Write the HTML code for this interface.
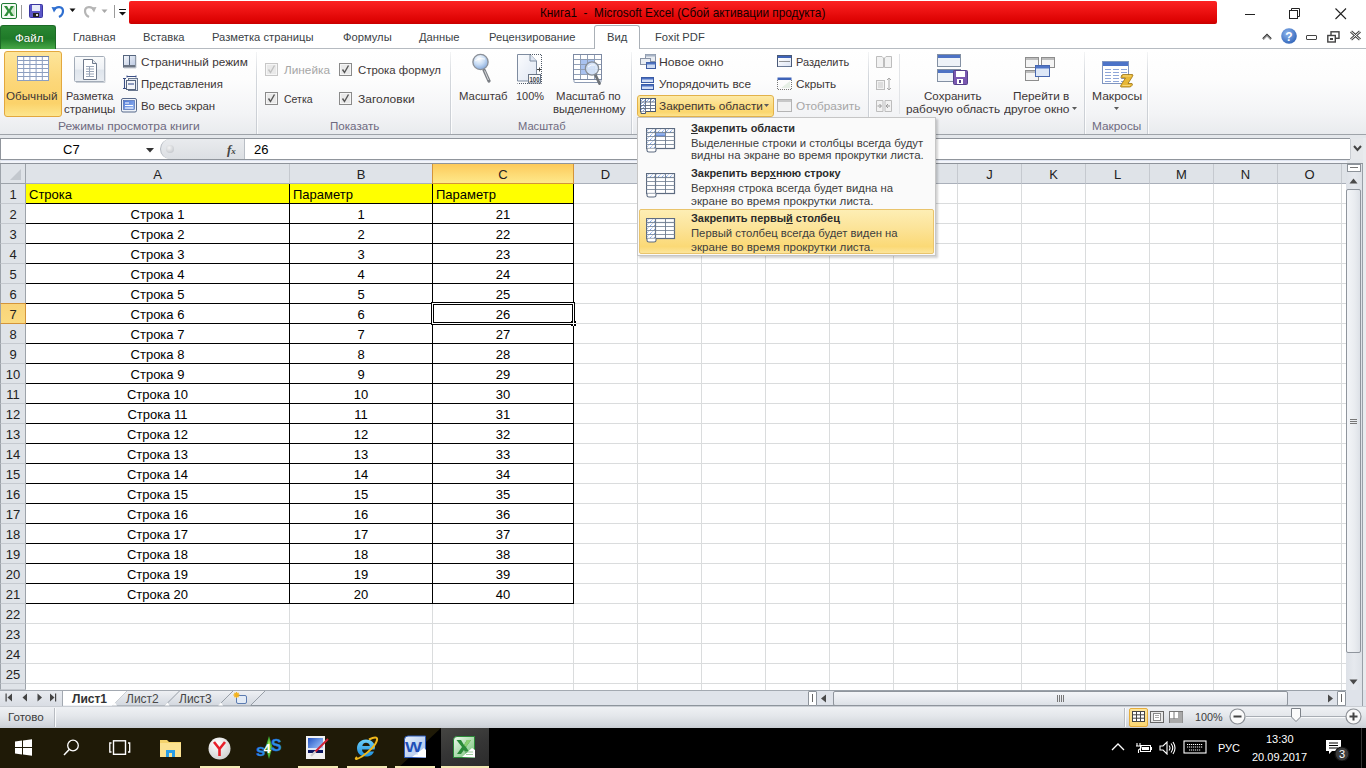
<!DOCTYPE html><html><head><meta charset="utf-8"><style>*{margin:0;padding:0;box-sizing:border-box}
html,body{width:1366px;height:768px;overflow:hidden;background:#fff;font-family:"Liberation Sans",sans-serif;position:relative}
.a{position:absolute}
.t{position:absolute;white-space:nowrap;color:#3b3b3b;font-size:12px;line-height:14px}
.hdrbg{background:#dfe3e8}
.colh{background:#dfe3e8;border-right:1px solid #c5c9cf;border-bottom:1px solid #aab0ba;font-size:13px;line-height:21px;text-align:center;color:#222}
.colh.sel{background:linear-gradient(#fdca5a,#fdd871 45%,#fee98b);border:1px solid #d3943a;border-top:none;color:#222}
.rowh{background:#dfe3e8;border-bottom:1px solid #c5c9cf;border-right:1px solid #9da3aa;border-left:1px solid #9da3aa;font-size:13px;line-height:21px;text-align:center;color:#222}
.rowh.sel{background:linear-gradient(#f9d47a,#fbdb80);border:1px solid #d3943a;border-left:1px solid #9da3aa;line-height:21px}
.gl{background:#dadcdd}
.cell{font-size:13px;line-height:21px;height:19px;color:#000;white-space:nowrap;overflow:hidden}
</style></head><body>
<svg class="a" style="left:1px;top:3px" width="17" height="17" viewBox="0 0 17 17"><rect x="0.5" y="0.5" width="15" height="15" rx="1.5" fill="#f4faf4" stroke="#1e7a34"/>
<rect x="9" y="3" width="5" height="10" fill="#cfe8cf"/>
<path d="M3 3 L6 3 L8 6.5 L10 3 L13 3 L9.6 8 L13 13 L10 13 L8 9.5 L6 13 L3 13 L6.4 8 Z" fill="#2f8f3a"/></svg>
<div class="a" style="left:21px;top:5px;width:1px;height:14px;background:#9a9a9a"></div>
<svg class="a" style="left:29px;top:4px" width="15" height="15" viewBox="0 0 15 15"><rect x="0.5" y="0.5" width="13" height="13" rx="1" fill="#5b57c8" stroke="#3a36a0"/>
<rect x="3" y="1" width="8" height="6" fill="#e8ecf8"/><rect x="4" y="9" width="6" height="4" fill="#222"/><rect x="7" y="10" width="2" height="2" fill="#ddd"/></svg>
<svg class="a" style="left:51px;top:4px" width="15" height="15" viewBox="0 0 15 15"><path d="M3 6 C5 2,12 2,12 7 C12 10,10 12,8 13" fill="none" stroke="#2f6fd0" stroke-width="2.2"/>
<path d="M0.5 3 L6 3.5 L3 8.5 Z" fill="#2f6fd0"/></svg>
<svg class="a" style="left:69px;top:8px" width="8" height="5" viewBox="0 0 8 5"><path d="M0.5 0.5 L6.5 0.5 L3.5 4 Z" fill="#111"/></svg>
<svg class="a" style="left:82px;top:4px" width="15" height="15" viewBox="0 0 15 15"><path d="M12 6 C10 2,3 2,3 7 C3 10,5 12,7 13" fill="none" stroke="#b5b5b5" stroke-width="2.2"/>
<path d="M14.5 3 L9 3.5 L12 8.5 Z" fill="#b5b5b5"/></svg>
<svg class="a" style="left:101px;top:9px" width="8" height="5" viewBox="0 0 8 5"><path d="M0.5 0.5 L6.5 0.5 L3.5 4 Z" fill="#a8a8a8"/></svg>
<div class="a" style="left:114px;top:5px;width:1px;height:13px;background:#9a9a9a"></div>
<div class="a" style="left:119px;top:9px;width:7px;height:1px;background:#111"></div>
<svg class="a" style="left:119px;top:12px" width="8" height="4" viewBox="0 0 8 4"><path d="M0 0 L7 0 L3.5 3.5 Z" fill="#111"/></svg>
<div class="a" style="left:129px;top:1px;width:1088px;height:23px;border-radius:2px;background:linear-gradient(#fc2222,#ee1313 40%,#dd0202 85%,#c80000);"></div>
<div class="t" style="left:540px;top:7px;font-size:12.8px;line-height:12.8px;color:#120000;transform:scaleX(0.92);transform-origin:0 0">Книга1&nbsp; -&nbsp; Microsoft Excel (Сбой активации продукта)</div>
<div class="a" style="left:1245px;top:14px;width:10px;height:1px;background:#222"></div>
<svg class="a" style="left:1289px;top:8px" width="13" height="13" viewBox="0 0 13 13"><rect x="0.5" y="2.5" width="8" height="8" fill="none" stroke="#222"/><path d="M2.5 2.5 V0.5 H10.5 V8.5 H8.5" fill="none" stroke="#222"/></svg>
<svg class="a" style="left:1335px;top:8px" width="13" height="13" viewBox="0 0 13 13"><path d="M0.5 0.5 L11 11 M11 0.5 L0.5 11" stroke="#222" stroke-width="1.1"/></svg>
<div class="a" style="left:0px;top:48px;width:594px;height:1px;background:#b6bbc1"></div>
<div class="a" style="left:640px;top:48px;width:726px;height:1px;background:#b6bbc1"></div>
<div class="a" style="left:0px;top:25px;width:56px;height:24px;border-radius:3px 3px 0 0;background:linear-gradient(#2a8733,#1f7a28 55%,#47a847);border:1px solid #1d6a27;border-bottom:none"></div>
<div class="t" style="left:15px;top:32px;font-size:11.6px;line-height:11.6px;color:#fff;text-shadow:0 0 2px rgba(0,0,0,.35)">Файл</div>
<div class="a" style="left:594px;top:25px;width:46px;height:24px;background:#fff;border:1px solid #aab0b7;border-bottom:none;border-radius:3px 3px 0 0"></div>
<div class="t" style="left:73px;top:32px;font-size:11.2px;line-height:11.2px;color:#3b3f46;">Главная</div>
<div class="t" style="left:143px;top:32px;font-size:11.2px;line-height:11.2px;color:#3b3f46;">Вставка</div>
<div class="t" style="left:212px;top:32px;font-size:11.2px;line-height:11.2px;color:#3b3f46;">Разметка страницы</div>
<div class="t" style="left:343px;top:32px;font-size:11.2px;line-height:11.2px;color:#3b3f46;">Формулы</div>
<div class="t" style="left:419px;top:32px;font-size:11.2px;line-height:11.2px;color:#3b3f46;">Данные</div>
<div class="t" style="left:489px;top:32px;font-size:11.2px;line-height:11.2px;color:#3b3f46;">Рецензирование</div>
<div class="t" style="left:607px;top:32px;font-size:11.2px;line-height:11.2px;color:#3b3f46;">Вид</div>
<div class="t" style="left:655px;top:32px;font-size:11.2px;line-height:11.2px;color:#3b3f46;">Foxit PDF</div>
<svg class="a" style="left:1262px;top:32px" width="11" height="9" viewBox="0 0 11 9"><path d="M1 7 L5 3 L9 7" fill="none" stroke="#333" stroke-width="2.2"/><path d="M1.6 7 L5 3.6 L8.4 7" fill="none" stroke="#fff" stroke-width="0.8"/></svg>
<svg class="a" style="left:1281px;top:28px" width="17" height="17" viewBox="0 0 17 17"><defs><radialGradient id="hg" cx="40%" cy="35%" r="70%"><stop offset="0" stop-color="#8fb6ee"/><stop offset="1" stop-color="#2f63b8"/></radialGradient></defs><circle cx="8" cy="8" r="7.8" fill="url(#hg)"/><text x="8" y="13" font-family="Liberation Sans" font-weight="bold" font-size="12" fill="#fff" text-anchor="middle">?</text></svg>
<div class="a" style="left:1306px;top:35px;width:11px;height:5px;border:1.5px solid #444;border-radius:1px;background:#fff"></div>
<svg class="a" style="left:1327px;top:31px" width="13" height="12" viewBox="0 0 13 12"><rect x="4" y="0.8" width="8" height="6.5" fill="#fff" stroke="#444" stroke-width="1.4"/><rect x="0.8" y="4.5" width="7.5" height="6.5" fill="#fff" stroke="#444" stroke-width="1.4"/><rect x="3" y="7" width="3" height="2" fill="#444"/></svg>
<svg class="a" style="left:1349px;top:30px" width="13" height="11" viewBox="0 0 13 11"><path d="M2 1.5 L11 9.5 M11 1.5 L2 9.5" stroke="#444" stroke-width="3"/><path d="M2 1.5 L11 9.5 M11 1.5 L2 9.5" stroke="#fff" stroke-width="1"/></svg>
<div class="a" style="left:0px;top:49px;width:1366px;height:85px;background:linear-gradient(#fff 0,#fdfdfd 35%,#f3f4f6 75%,#e9ebee 100%)"></div>
<div class="a" style="left:0px;top:134px;width:1366px;height:1px;background:#9ea3a9"></div>
<div class="a" style="left:0px;top:135px;width:1366px;height:3px;background:#e4e7eb"></div>
<div class="a" style="left:256px;top:52px;width:1px;height:82px;background:linear-gradient(rgba(200,204,210,.2),#d3d7dc 30%,#c9cdd3)"></div>
<div class="a" style="left:257px;top:52px;width:1px;height:82px;background:rgba(255,255,255,.8)"></div>
<div class="a" style="left:450px;top:52px;width:1px;height:82px;background:linear-gradient(rgba(200,204,210,.2),#d3d7dc 30%,#c9cdd3)"></div>
<div class="a" style="left:451px;top:52px;width:1px;height:82px;background:rgba(255,255,255,.8)"></div>
<div class="a" style="left:631px;top:52px;width:1px;height:82px;background:linear-gradient(rgba(200,204,210,.2),#d3d7dc 30%,#c9cdd3)"></div>
<div class="a" style="left:632px;top:52px;width:1px;height:82px;background:rgba(255,255,255,.8)"></div>
<div class="a" style="left:868px;top:52px;width:1px;height:82px;background:linear-gradient(rgba(200,204,210,.2),#d3d7dc 30%,#c9cdd3)"></div>
<div class="a" style="left:869px;top:52px;width:1px;height:82px;background:rgba(255,255,255,.8)"></div>
<div class="a" style="left:1084px;top:52px;width:1px;height:82px;background:linear-gradient(rgba(200,204,210,.2),#d3d7dc 30%,#c9cdd3)"></div>
<div class="a" style="left:1085px;top:52px;width:1px;height:82px;background:rgba(255,255,255,.8)"></div>
<div class="a" style="left:1147px;top:52px;width:1px;height:82px;background:linear-gradient(rgba(200,204,210,.2),#d3d7dc 30%,#c9cdd3)"></div>
<div class="a" style="left:1148px;top:52px;width:1px;height:82px;background:rgba(255,255,255,.8)"></div>
<div class="a" style="left:899px;top:54px;width:1px;height:60px;background:#e2e4e7"></div>
<div class="t" style="left:58px;top:120px;font-size:11.6px;line-height:11.6px;color:#6e6a80;transform:scaleX(1.039);transform-origin:0 0;">Режимы просмотра книги</div>
<div class="t" style="left:330px;top:120px;font-size:11.6px;line-height:11.6px;color:#6e6a80;">Показать</div>
<div class="t" style="left:518px;top:120px;font-size:11.6px;line-height:11.6px;color:#6e6a80;transform:scaleX(0.961);transform-origin:0 0;">Масштаб</div>
<div class="t" style="left:1092px;top:120px;font-size:11.6px;line-height:11.6px;color:#6e6a80;transform:scaleX(1.021);transform-origin:0 0;">Макросы</div>
<div class="a" style="left:4px;top:51px;width:58px;height:66px;border:1px solid #e3a83e;border-radius:3px;background:linear-gradient(#fde59a 0,#fcd77a 45%,#fbd26a 80%,#fde68e 100%)"></div>
<svg class="a" style="left:17px;top:56px" width="32" height="26" viewBox="0 0 32 26"><rect x="0" y="0" width="32" height="25" fill="#8d9fc0"/><rect x="1.0" y="1" width="5.2" height="3" fill="#fff"/><rect x="7.2" y="1" width="5.2" height="3" fill="#fff"/><rect x="13.4" y="1" width="5.2" height="3" fill="#fff"/><rect x="19.6" y="1" width="5.2" height="3" fill="#fff"/><rect x="25.8" y="1" width="5.2" height="3" fill="#fff"/><rect x="1.0" y="5" width="5.2" height="3" fill="#fff"/><rect x="7.2" y="5" width="5.2" height="3" fill="#fff"/><rect x="13.4" y="5" width="5.2" height="3" fill="#fff"/><rect x="19.6" y="5" width="5.2" height="3" fill="#fff"/><rect x="25.8" y="5" width="5.2" height="3" fill="#fff"/><rect x="1.0" y="9" width="5.2" height="3" fill="#fff"/><rect x="7.2" y="9" width="5.2" height="3" fill="#fff"/><rect x="13.4" y="9" width="5.2" height="3" fill="#fff"/><rect x="19.6" y="9" width="5.2" height="3" fill="#fff"/><rect x="25.8" y="9" width="5.2" height="3" fill="#fff"/><rect x="1.0" y="13" width="5.2" height="3" fill="#fff"/><rect x="7.2" y="13" width="5.2" height="3" fill="#fff"/><rect x="13.4" y="13" width="5.2" height="3" fill="#fff"/><rect x="19.6" y="13" width="5.2" height="3" fill="#fff"/><rect x="25.8" y="13" width="5.2" height="3" fill="#fff"/><rect x="1.0" y="17" width="5.2" height="3" fill="#fff"/><rect x="7.2" y="17" width="5.2" height="3" fill="#fff"/><rect x="13.4" y="17" width="5.2" height="3" fill="#fff"/><rect x="19.6" y="17" width="5.2" height="3" fill="#fff"/><rect x="25.8" y="17" width="5.2" height="3" fill="#fff"/><rect x="1.0" y="21" width="5.2" height="3" fill="#fff"/><rect x="7.2" y="21" width="5.2" height="3" fill="#fff"/><rect x="13.4" y="21" width="5.2" height="3" fill="#fff"/><rect x="19.6" y="21" width="5.2" height="3" fill="#fff"/><rect x="25.8" y="21" width="5.2" height="3" fill="#fff"/><rect x="0" y="0" width="32" height="1" fill="#6a7fa8"/></svg>
<div class="t" style="left:6px;top:91px;font-size:11.8px;line-height:11.8px;color:#3c3636;transform:scaleX(0.987);transform-origin:0 0;">Обычный</div>
<svg class="a" style="left:74px;top:56px" width="33" height="28" viewBox="0 0 33 28"><defs><linearGradient id="rfr" x1="0" y1="0" x2="0" y2="1"><stop offset="0" stop-color="#fafbfc"/><stop offset="0.5" stop-color="#eef1f5"/><stop offset="0.55" stop-color="#dfe5ec"/><stop offset="1" stop-color="#e9edf2"/></linearGradient></defs><rect x="0.5" y="0.5" width="30" height="25" rx="1" fill="url(#rfr)" stroke="#a3acb8"/><path d="M31 2 V26.5 H2" fill="none" stroke="#c9ced5"/><path d="M9.5 3.5 H18.5 L22.5 7.5 V23.5 H9.5 Z" fill="#fff" stroke="#6f7a8c"/><path d="M18.5 3.5 V7.5 H22.5" fill="#e8ecf2" stroke="#6f7a8c"/><path d="M12 10.5 H20 M12 13 H20 M12 15.5 H20 M12 18 H20 M12 20.5 H20" stroke="#9aa6b8"/><path d="M15.5 10 V21" stroke="#9aa6b8"/></svg>
<div class="t" style="left:66px;top:91px;font-size:11.8px;line-height:11.8px;color:#3c3636;transform:scaleX(0.928);transform-origin:0 0;">Разметка</div>
<div class="t" style="left:64px;top:104px;font-size:11.8px;line-height:11.8px;color:#3c3636;transform:scaleX(0.973);transform-origin:0 0;">страницы</div>
<svg class="a" style="left:122px;top:55px" width="16" height="14" viewBox="0 0 16 14"><defs><linearGradient id="pg1" x1="0" y1="0" x2="1" y2="1"><stop offset="0" stop-color="#f6f8fc"/><stop offset="1" stop-color="#b8c6e0"/></linearGradient></defs><rect x="1.5" y="0.5" width="12" height="11.5" fill="url(#pg1)" stroke="#56667f"/><path d="M7.5 0.5 V10" stroke="#56667f"/><rect x="1.5" y="10" width="12" height="2.5" fill="#6d7684"/><path d="M2 13 H14 V1" fill="none" stroke="#c8ccd2"/></svg>
<div class="t" style="left:141px;top:57px;font-size:11.8px;line-height:11.8px;color:#3c3636;">Страничный режим</div>
<svg class="a" style="left:122px;top:75px" width="17" height="17" viewBox="0 0 17 17"><path d="M1 3.5 H4 M2.5 3.5 V13.5 M1 13.5 H4" fill="none" stroke="#3b4f86" stroke-width="1.1"/><path d="M5 1.5 H14 M5 0.5 V2.5 M14 0.5 V2.5" fill="none" stroke="#3b4f86"/><rect x="6.5" y="3.5" width="9" height="12" fill="#e3e9f2" stroke="#6a7890"/><rect x="4.5" y="5.5" width="9" height="9" fill="#f3f5f9" stroke="#56657e"/><rect x="6" y="8" width="6" height="2" fill="#8e9cc0"/></svg>
<div class="t" style="left:141px;top:79px;font-size:11.8px;line-height:11.8px;color:#3c3636;transform:scaleX(0.964);transform-origin:0 0;">Представления</div>
<svg class="a" style="left:121px;top:98px" width="17" height="16" viewBox="0 0 17 16"><defs><linearGradient id="fs1" x1="0" y1="0" x2="1" y2="1"><stop offset="0" stop-color="#4a74d6"/><stop offset="1" stop-color="#9cbcf4"/></linearGradient></defs><rect x="0.5" y="0.5" width="15" height="13.5" rx="1.5" fill="#eef2f8" stroke="#56688a"/><rect x="2.5" y="2.5" width="11" height="9" fill="url(#fs1)" stroke="#3f5fa8" stroke-width="0.6"/><path d="M4 5 H8 M4 7.5 H12 M4 10 H12" stroke="#fff" stroke-width="1.1"/></svg>
<div class="t" style="left:141px;top:101px;font-size:11.8px;line-height:11.8px;color:#3c3636;transform:scaleX(0.969);transform-origin:0 0;">Во весь экран</div>
<svg class="a" style="left:265px;top:63px" width="14" height="14" viewBox="0 0 14 14"><rect x="0.5" y="0.5" width="12" height="12" fill="#f6f6f6" stroke="#c7c7c7"/><rect x="2" y="2" width="9" height="9" fill="#e9e9e9"/><path d="M3.5 6.5 L5.5 9.5 L9.5 2.5" fill="none" stroke="#c0c0c0" stroke-width="1.4"/></svg>
<div class="t" style="left:284px;top:65px;font-size:11.8px;line-height:11.8px;color:#a6a6a6;">Линейка</div>
<svg class="a" style="left:339px;top:63px" width="14" height="14" viewBox="0 0 14 14"><rect x="0.5" y="0.5" width="12" height="12" fill="#f6f6f6" stroke="#8a8a8a"/><rect x="2" y="2" width="9" height="9" fill="#e9e9e9"/><path d="M3.5 6.5 L5.5 9.5 L9.5 2.5" fill="none" stroke="#555" stroke-width="1.4"/></svg>
<div class="t" style="left:358px;top:65px;font-size:11.8px;line-height:11.8px;color:#3c3636;transform:scaleX(0.966);transform-origin:0 0;">Строка формул</div>
<svg class="a" style="left:265px;top:92px" width="14" height="14" viewBox="0 0 14 14"><rect x="0.5" y="0.5" width="12" height="12" fill="#f6f6f6" stroke="#8a8a8a"/><rect x="2" y="2" width="9" height="9" fill="#e9e9e9"/><path d="M3.5 6.5 L5.5 9.5 L9.5 2.5" fill="none" stroke="#555" stroke-width="1.4"/></svg>
<div class="t" style="left:284px;top:94px;font-size:11.8px;line-height:11.8px;color:#3c3636;transform:scaleX(0.891);transform-origin:0 0;">Сетка</div>
<svg class="a" style="left:339px;top:92px" width="14" height="14" viewBox="0 0 14 14"><rect x="0.5" y="0.5" width="12" height="12" fill="#f6f6f6" stroke="#8a8a8a"/><rect x="2" y="2" width="9" height="9" fill="#e9e9e9"/><path d="M3.5 6.5 L5.5 9.5 L9.5 2.5" fill="none" stroke="#555" stroke-width="1.4"/></svg>
<div class="t" style="left:358px;top:94px;font-size:11.8px;line-height:11.8px;color:#3c3636;transform:scaleX(1.018);transform-origin:0 0;">Заголовки</div>
<svg class="a" style="left:470px;top:52px" width="22" height="33" viewBox="0 0 22 33"><defs><radialGradient id="mg" cx="40%" cy="30%" r="75%"><stop offset="0" stop-color="#ffffff"/><stop offset="0.5" stop-color="#c8dcf4"/><stop offset="1" stop-color="#7fa4d8"/></radialGradient></defs><path d="M14 18 L19 29" stroke="#7a7e84" stroke-width="3.2" stroke-linecap="round"/><path d="M14.5 18.5 L18.5 28" stroke="#d8dadc" stroke-width="1"/><circle cx="10.5" cy="10" r="7.6" fill="url(#mg)" stroke="#8b9098" stroke-width="1.4"/><path d="M5 9 Q9 5 15 7" fill="none" stroke="#fff" stroke-width="1" opacity=".8"/></svg>
<div class="t" style="left:459px;top:91px;font-size:11.8px;line-height:11.8px;color:#3c3636;transform:scaleX(0.961);transform-origin:0 0;">Масштаб</div>
<svg class="a" style="left:516px;top:53px" width="28" height="32" viewBox="0 0 28 32"><defs><linearGradient id="p100" x1="0" y1="0" x2="1" y2="1"><stop offset="0" stop-color="#fbfcfe"/><stop offset="1" stop-color="#dfe6f2"/></linearGradient></defs><path d="M1.5 1.5 H14 L20.5 8 V28 H1.5 Z" fill="url(#p100)" stroke="#7f8ca0"/><path d="M14 1.5 V8 H20.5" fill="#dfe6f2" stroke="#7f8ca0"/><path d="M14 1.5 H25.5 V30.5 H1.5" fill="none" stroke="#505a68" stroke-dasharray="1 1"/><path d="M21 16.5 H25 M23.5 14.5 V18.5" stroke="#444" /><rect x="12.5" y="21.5" width="12" height="8.5" fill="#f8f9fb" stroke="#6a7484"/><text x="18.5" y="28.6" font-family="Liberation Sans" font-weight="bold" font-size="7.5" fill="#3a3f48" text-anchor="middle" textLength="10" lengthAdjust="spacingAndGlyphs">100</text></svg>
<div class="t" style="left:516px;top:91px;font-size:11.8px;line-height:11.8px;color:#3c3636;transform:scaleX(0.931);transform-origin:0 0;">100%</div>
<svg class="a" style="left:573px;top:54px" width="31" height="32" viewBox="0 0 31 32"><rect x="0.5" y="0.5" width="7" height="5" fill="#fff" stroke="#8d9bb3" stroke-width="0.9"/><rect x="7.5" y="0.5" width="7" height="5" fill="#fff" stroke="#8d9bb3" stroke-width="0.9"/><rect x="14.5" y="0.5" width="7" height="5" fill="#fff" stroke="#8d9bb3" stroke-width="0.9"/><rect x="21.5" y="0.5" width="7" height="5" fill="#fff" stroke="#8d9bb3" stroke-width="0.9"/><rect x="0.5" y="5.5" width="7" height="5" fill="#fff" stroke="#8d9bb3" stroke-width="0.9"/><rect x="7.5" y="5.5" width="7" height="5" fill="#a9c2f0" stroke="#8d9bb3" stroke-width="0.9"/><rect x="14.5" y="5.5" width="7" height="5" fill="#a9c2f0" stroke="#8d9bb3" stroke-width="0.9"/><rect x="21.5" y="5.5" width="7" height="5" fill="#fff" stroke="#8d9bb3" stroke-width="0.9"/><rect x="0.5" y="10.5" width="7" height="5" fill="#fff" stroke="#8d9bb3" stroke-width="0.9"/><rect x="7.5" y="10.5" width="7" height="5" fill="#a9c2f0" stroke="#8d9bb3" stroke-width="0.9"/><rect x="14.5" y="10.5" width="7" height="5" fill="#a9c2f0" stroke="#8d9bb3" stroke-width="0.9"/><rect x="21.5" y="10.5" width="7" height="5" fill="#fff" stroke="#8d9bb3" stroke-width="0.9"/><rect x="0.5" y="15.5" width="7" height="5" fill="#fff" stroke="#8d9bb3" stroke-width="0.9"/><rect x="7.5" y="15.5" width="7" height="5" fill="#a9c2f0" stroke="#8d9bb3" stroke-width="0.9"/><rect x="14.5" y="15.5" width="7" height="5" fill="#a9c2f0" stroke="#8d9bb3" stroke-width="0.9"/><rect x="21.5" y="15.5" width="7" height="5" fill="#fff" stroke="#8d9bb3" stroke-width="0.9"/><rect x="0.5" y="20.5" width="7" height="5" fill="#fff" stroke="#8d9bb3" stroke-width="0.9"/><rect x="7.5" y="20.5" width="7" height="5" fill="#fff" stroke="#8d9bb3" stroke-width="0.9"/><rect x="14.5" y="20.5" width="7" height="5" fill="#fff" stroke="#8d9bb3" stroke-width="0.9"/><rect x="21.5" y="20.5" width="7" height="5" fill="#fff" stroke="#8d9bb3" stroke-width="0.9"/><rect x="0.5" y="0.5" width="28" height="25" fill="none" stroke="#7d8aa3"/><path d="M1 26 V27.5 Q1 28.5 2 28.5 H27 Q28 28.5 28 27.5 V26" fill="#fff" stroke="#8d9bb3"/><path d="M22 20 L26.5 29.5" stroke="#6f7378" stroke-width="2.8" stroke-linecap="round"/><circle cx="19" cy="14.5" r="6.6" fill="rgba(214,228,248,.9)" stroke="#868c94" stroke-width="1.3"/><path d="M15 13 Q18 10 22 11" fill="none" stroke="#fff" stroke-width="0.9"/></svg>
<div class="t" style="left:556px;top:91px;font-size:11.8px;line-height:11.8px;color:#3c3636;transform:scaleX(0.97);transform-origin:0 0;">Масштаб по</div>
<div class="t" style="left:553px;top:104px;font-size:11.8px;line-height:11.8px;color:#3c3636;transform:scaleX(0.966);transform-origin:0 0;">выделенному</div>
<svg class="a" style="left:640px;top:54px" width="17" height="16" viewBox="0 0 17 16"><rect x="5.5" y="0.5" width="10" height="7" fill="#e9edf3" stroke="#8994a6"/><rect x="5.5" y="0.5" width="10" height="2" fill="#a8b4c6"/><rect x="0.5" y="4.5" width="10" height="6" fill="#e9edf3" stroke="#8994a6"/><rect x="6.5" y="8.5" width="9" height="6" fill="#cfdcf3" stroke="#3b5aa0"/><rect x="6.5" y="8.5" width="9" height="2" fill="#4f73c0"/></svg>
<div class="t" style="left:659px;top:57px;font-size:11.8px;line-height:11.8px;color:#3c3636;transform:scaleX(1.034);transform-origin:0 0;">Новое окно</div>
<svg class="a" style="left:641px;top:77px" width="14" height="14" viewBox="0 0 14 14"><rect x="0.5" y="0.5" width="12" height="5" fill="#d3def4" stroke="#3a5ba5"/><rect x="1" y="1" width="11" height="1.5" fill="#4a6fc2"/><rect x="0.5" y="7.5" width="12" height="5" fill="#d3def4" stroke="#3a5ba5"/><rect x="1" y="8" width="11" height="1.5" fill="#4a6fc2"/></svg>
<div class="t" style="left:659px;top:79px;font-size:11.8px;line-height:11.8px;color:#3c3636;">Упорядочить все</div>
<div class="a" style="left:637px;top:95px;width:137px;height:22px;border:1px solid #e2b24a;border-radius:3px;background:linear-gradient(#fdeaa6,#fcdc82 50%,#fbd66d 80%,#fde38e)"></div>
<svg class="a" style="left:639px;top:97px" width="18" height="18" viewBox="0 0 18 18"><defs><pattern id="hps" width="3" height="3" patternUnits="userSpaceOnUse"><rect width="3" height="3" fill="#fff"/><path d="M0 3 L3 0" stroke="#7fa2e0" stroke-width="0.9"/></pattern></defs><rect x="1.5" y="1.5" width="15" height="13" fill="#fff"/><rect x="2" y="2" width="4.5" height="12.5" fill="url(#hps)"/><rect x="2" y="2" width="14.5" height="3" fill="url(#hps)"/><rect x="1.5" y="1.5" width="15" height="13" fill="none" stroke="#4a5870"/><path d="M1.5 5 H16.5 M1.5 8.5 H16.5 M1.5 11.5 H16.5 M6.5 1.5 V14.5 M11.5 1.5 V14.5" stroke="#5f6c82" stroke-width="0.9"/><path d="M2 14.5 V16.5 H6.5 V14.5" fill="#fff" stroke="#4a5870"/></svg>
<div class="t" style="left:659px;top:101px;font-size:11.8px;line-height:11.8px;color:#3c3636;">Закрепить области</div>
<svg class="a" style="left:764px;top:104px" width="6" height="4" viewBox="0 0 6 4"><path d="M0 0 H5 L2.5 3 Z" fill="#5a5a5a"/></svg>
<svg class="a" style="left:777px;top:55px" width="16" height="13" viewBox="0 0 16 13"><defs><linearGradient id="spg" x1="0" y1="0" x2="1" y2="1"><stop offset="0" stop-color="#fff"/><stop offset="1" stop-color="#b8c8e8"/></linearGradient></defs><rect x="0.5" y="0.5" width="14" height="11" fill="#fff" stroke="#4a5a78"/><rect x="1" y="1" width="13" height="2" fill="#3f63b8"/><rect x="1" y="3" width="13" height="8.5" fill="url(#spg)" opacity=".5"/><path d="M2.5 6.5 H13" stroke="#333" stroke-dasharray="1 1"/></svg>
<div class="t" style="left:796px;top:57px;font-size:11.8px;line-height:11.8px;color:#3c3636;transform:scaleX(0.932);transform-origin:0 0;">Разделить</div>
<svg class="a" style="left:777px;top:77px" width="16" height="14" viewBox="0 0 16 14"><rect x="0.5" y="0.5" width="14" height="2.5" fill="#3f63b8"/><path d="M0.5 3 V12.5 H14.5 V3" fill="none" stroke="#777" stroke-dasharray="1 1"/><path d="M4 11 L13 4 V11 Z" fill="#e6efe6"/></svg>
<div class="t" style="left:796px;top:79px;font-size:11.8px;line-height:11.8px;color:#3c3636;">Скрыть</div>
<svg class="a" style="left:777px;top:99px" width="16" height="14" viewBox="0 0 16 14"><rect x="0.5" y="0.5" width="14" height="12" fill="#f2f2f2" stroke="#b4b4b4"/><rect x="1" y="1" width="13" height="2" fill="#c8c8c8"/></svg>
<div class="t" style="left:796px;top:101px;font-size:11.8px;line-height:11.8px;color:#a6a6a6;">Отобразить</div>
<svg class="a" style="left:875px;top:55px" width="18" height="14" viewBox="0 0 18 14"><path d="M1.5 1.5 H7 L8.5 3 V12.5 H1.5 Z M9.5 3 L11 1.5 H16.5 V12.5 H9.5 Z" fill="#f2f2f2" stroke="#bdbdbd"/></svg>
<svg class="a" style="left:875px;top:77px" width="18" height="15" viewBox="0 0 18 15"><rect x="1.5" y="3.5" width="8" height="9" fill="#f2f2f2" stroke="#bdbdbd"/><path d="M3 6 H8 M3 8 H8 M3 10 H8" stroke="#c8c8c8"/><path d="M14 1 V13 M12 3 L14 1 L16 3 M12 11 L14 13 L16 11" fill="none" stroke="#aaa"/></svg>
<svg class="a" style="left:875px;top:99px" width="18" height="14" viewBox="0 0 18 14"><path d="M1.5 1.5 H8 V12.5 H1.5 Z M10 1.5 H16.5 V12.5 H10 Z" fill="#f2f2f2" stroke="#bdbdbd"/><path d="M2.5 7 H6 M4.5 5 L6.5 7 L4.5 9 M15 7 H11.5 M13 5 L11 7 L13 9" fill="none" stroke="#999"/></svg>
<svg class="a" style="left:937px;top:54px" width="33" height="32" viewBox="0 0 33 32"><rect x="0.5" y="0.5" width="23" height="12" fill="#eef2f8" stroke="#8390a3"/><rect x="1" y="1" width="22" height="3" fill="#4d72c4"/><rect x="0.5" y="15.5" width="23" height="12" fill="#eef2f8" stroke="#8390a3"/><rect x="1" y="16" width="22" height="3" fill="#4d72c4"/><rect x="16.5" y="16.5" width="14" height="14" rx="1" fill="#7a58b0" stroke="#54408a"/><rect x="19" y="17" width="9" height="6" fill="#fff"/><rect x="20" y="25" width="6" height="5" fill="#fff"/><rect x="22" y="26" width="2" height="3" fill="#54408a"/></svg>
<div class="t" style="left:924px;top:91px;font-size:11.8px;line-height:11.8px;color:#3c3636;transform:scaleX(0.981);transform-origin:0 0;">Сохранить</div>
<div class="t" style="left:906px;top:104px;font-size:11.8px;line-height:11.8px;color:#3c3636;">рабочую область</div>
<svg class="a" style="left:1025px;top:57px" width="31" height="27" viewBox="0 0 31 27"><rect x="0.5" y="0.5" width="13" height="10" fill="#f5f5f5" stroke="#8d8d8d"/><rect x="1" y="1" width="12" height="2" fill="#bdbdbd"/><rect x="16.5" y="0.5" width="13" height="10" fill="#f5f5f5" stroke="#8d8d8d"/><rect x="17" y="1" width="12" height="2" fill="#bdbdbd"/><rect x="0.5" y="13.5" width="13" height="10" fill="#f5f5f5" stroke="#8d8d8d"/><rect x="1" y="14" width="12" height="2" fill="#bdbdbd"/><rect x="10.5" y="8.5" width="14" height="11" fill="#dde7f7" stroke="#4767b0"/><rect x="11" y="9" width="13" height="2.5" fill="#4f74c6"/></svg>
<div class="t" style="left:1013px;top:91px;font-size:11.8px;line-height:11.8px;color:#3c3636;">Перейти в</div>
<div class="t" style="left:1004px;top:104px;font-size:11.8px;line-height:11.8px;color:#3c3636;transform:scaleX(1.016);transform-origin:0 0;">другое окно</div>
<svg class="a" style="left:1072px;top:107px" width="6" height="4" viewBox="0 0 6 4"><path d="M0 0 H5 L2.5 3 Z" fill="#5a5a5a"/></svg>
<svg class="a" style="left:1102px;top:61px" width="33" height="27" viewBox="0 0 33 27"><rect x="0.5" y="0.5" width="26" height="22" fill="#fff" stroke="#7f95c0"/><rect x="1" y="1" width="25" height="4" fill="#4c73c8"/><path d="M3 8.5 H9 M11 8.5 H17 M19 8.5 H25" stroke="#8ea6d8"/><path d="M3 11.5 H9 M11 11.5 H17 M19 11.5 H25" stroke="#8ea6d8"/><path d="M3 14.5 H9 M11 14.5 H17 M19 14.5 H25" stroke="#8ea6d8"/><path d="M3 17.5 H9 M11 17.5 H17 M19 17.5 H25" stroke="#8ea6d8"/><path d="M3 20.5 H9 M11 20.5 H17 M19 20.5 H25" stroke="#8ea6d8"/><path d="M21 13.5 H30.5 Q31.5 13.5 30.5 15.5 L26 22.5 H30 Q31 22.5 30 24.5 Q29 26 27.5 26 H19 Q18 26 19 24 L23.5 17 H19.5 Q18.5 17 19.5 15 Q20 13.5 21 13.5 Z" fill="#e8b838" stroke="#9c7414" stroke-width="0.8"/><path d="M21 15 H29 M20.5 24.5 H28" stroke="#fbe08a" stroke-width="0.8"/></svg>
<div class="t" style="left:1092px;top:91px;font-size:11.8px;line-height:11.8px;color:#3c3636;transform:scaleX(1.021);transform-origin:0 0;">Макросы</div>
<svg class="a" style="left:1114px;top:107px" width="6" height="4" viewBox="0 0 6 4"><path d="M0 0 H5 L2.5 3 Z" fill="#5a5a5a"/></svg>
<div class="a" style="left:0px;top:138px;width:1366px;height:25px;background:#e4e7eb"></div>
<div class="a" style="left:0px;top:138px;width:1350px;height:22px;background:#fff;border-top:1px solid #90959c;border-bottom:1px solid #90959c;border-left:1px solid #90959c"></div>
<div class="a" style="left:1350px;top:139px;width:15px;height:20px;background:#e6e8eb;border-left:1px solid #c9cdd2"></div>
<svg class="a" style="left:1353px;top:145px" width="10" height="7" viewBox="0 0 10 7"><path d="M1 1 L4.5 5 L8 1" fill="none" stroke="#444" stroke-width="2"/></svg>
<div class="a" style="left:1px;top:160px;width:1346px;height:3px;background:#f3f5fa;border-top:1px solid #dfe4f0"></div>
<div class="a" style="left:0px;top:163px;width:1366px;height:1px;background:#8f949b"></div>
<div class="t" style="left:63px;top:143px;font-size:13px;line-height:13px;color:#000;">C7</div>
<svg class="a" style="left:146px;top:148px" width="9" height="5" viewBox="0 0 9 5"><path d="M0 0 H8 L4 4.5 Z" fill="#333"/></svg>
<div class="a" style="left:160px;top:139px;width:85px;height:20px;background:linear-gradient(#e9ebee,#dcdfe3);border-radius:10px 0 0 10px;border-left:1px solid #b3b8bf"></div>
<div class="a" style="left:166px;top:145px;width:8px;height:8px;border-radius:50%;background:radial-gradient(circle at 40% 35%,#f4f4f4,#b9bdc3)"></div>
<div class="a" style="left:244px;top:139px;width:1px;height:20px;background:#b9bec5"></div>
<div class="t" style="left:227px;top:143px;font-size:13px;line-height:13px;color:#444;font-family:'Liberation Serif';font-weight:bold"><i>f<span style="font-size:9px">x</span></i></div>
<div class="t" style="left:254px;top:143px;font-size:13px;line-height:13px;color:#000;">26</div>
<div id="grid">
<div class="a hdrbg" style="left:0;top:164px;width:1346px;height:20px;border-bottom:1px solid #aab0ba"></div>
<div class="a" style="left:0;top:164px;width:26px;height:20px;background:#dfe3e8;border-left:1px solid #9da3aa;border-right:1px solid #9da3aa;border-bottom:1px solid #9da3aa"></div>
<svg class="a" style="left:9px;top:168px" width="14" height="13"><path d="M12 1 L12 12 L1 12 Z" fill="#c3c8ce"/></svg>
<div class="a colh" style="left:26px;top:164px;width:264px;height:20px">A</div>
<div class="a colh" style="left:290px;top:164px;width:143px;height:20px">B</div>
<div class="a colh sel" style="left:432px;top:164px;width:142px;height:20px">C</div>
<div class="a colh" style="left:574px;top:164px;width:64px;height:20px">D</div>
<div class="a colh" style="left:638px;top:164px;width:64px;height:20px">E</div>
<div class="a colh" style="left:702px;top:164px;width:64px;height:20px">F</div>
<div class="a colh" style="left:766px;top:164px;width:64px;height:20px">G</div>
<div class="a colh" style="left:830px;top:164px;width:64px;height:20px">H</div>
<div class="a colh" style="left:894px;top:164px;width:64px;height:20px">I</div>
<div class="a colh" style="left:958px;top:164px;width:64px;height:20px">J</div>
<div class="a colh" style="left:1022px;top:164px;width:64px;height:20px">K</div>
<div class="a colh" style="left:1086px;top:164px;width:64px;height:20px">L</div>
<div class="a colh" style="left:1150px;top:164px;width:64px;height:20px">M</div>
<div class="a colh" style="left:1214px;top:164px;width:64px;height:20px">N</div>
<div class="a colh" style="left:1278px;top:164px;width:64px;height:20px">O</div>
<div class="a colh" style="left:1342px;top:164px;width:64px;height:20px">P</div>
<div class="a rowh" style="left:0;top:184px;width:26px;height:20px">1</div>
<div class="a rowh" style="left:0;top:204px;width:26px;height:20px">2</div>
<div class="a rowh" style="left:0;top:224px;width:26px;height:20px">3</div>
<div class="a rowh" style="left:0;top:244px;width:26px;height:20px">4</div>
<div class="a rowh" style="left:0;top:264px;width:26px;height:20px">5</div>
<div class="a rowh" style="left:0;top:284px;width:26px;height:20px">6</div>
<div class="a rowh sel" style="left:0;top:303px;width:26px;height:21px">7</div>
<div class="a rowh" style="left:0;top:324px;width:26px;height:20px">8</div>
<div class="a rowh" style="left:0;top:344px;width:26px;height:20px">9</div>
<div class="a rowh" style="left:0;top:364px;width:26px;height:20px">10</div>
<div class="a rowh" style="left:0;top:384px;width:26px;height:20px">11</div>
<div class="a rowh" style="left:0;top:404px;width:26px;height:20px">12</div>
<div class="a rowh" style="left:0;top:424px;width:26px;height:20px">13</div>
<div class="a rowh" style="left:0;top:444px;width:26px;height:20px">14</div>
<div class="a rowh" style="left:0;top:464px;width:26px;height:20px">15</div>
<div class="a rowh" style="left:0;top:484px;width:26px;height:20px">16</div>
<div class="a rowh" style="left:0;top:504px;width:26px;height:20px">17</div>
<div class="a rowh" style="left:0;top:524px;width:26px;height:20px">18</div>
<div class="a rowh" style="left:0;top:544px;width:26px;height:20px">19</div>
<div class="a rowh" style="left:0;top:564px;width:26px;height:20px">20</div>
<div class="a rowh" style="left:0;top:584px;width:26px;height:20px">21</div>
<div class="a rowh" style="left:0;top:604px;width:26px;height:20px">22</div>
<div class="a rowh" style="left:0;top:624px;width:26px;height:20px">23</div>
<div class="a rowh" style="left:0;top:644px;width:26px;height:20px">24</div>
<div class="a rowh" style="left:0;top:664px;width:26px;height:20px">25</div>
<div class="a rowh" style="left:0;top:684px;width:26px;height:6px"></div>
<div class="a gl" style="left:289px;top:184px;width:1px;height:506px"></div>
<div class="a gl" style="left:432px;top:184px;width:1px;height:506px"></div>
<div class="a gl" style="left:573px;top:184px;width:1px;height:506px"></div>
<div class="a gl" style="left:637px;top:184px;width:1px;height:506px"></div>
<div class="a gl" style="left:701px;top:184px;width:1px;height:506px"></div>
<div class="a gl" style="left:765px;top:184px;width:1px;height:506px"></div>
<div class="a gl" style="left:829px;top:184px;width:1px;height:506px"></div>
<div class="a gl" style="left:893px;top:184px;width:1px;height:506px"></div>
<div class="a gl" style="left:957px;top:184px;width:1px;height:506px"></div>
<div class="a gl" style="left:1021px;top:184px;width:1px;height:506px"></div>
<div class="a gl" style="left:1085px;top:184px;width:1px;height:506px"></div>
<div class="a gl" style="left:1149px;top:184px;width:1px;height:506px"></div>
<div class="a gl" style="left:1213px;top:184px;width:1px;height:506px"></div>
<div class="a gl" style="left:1277px;top:184px;width:1px;height:506px"></div>
<div class="a gl" style="left:1341px;top:184px;width:1px;height:506px"></div>
<div class="a gl" style="left:1405px;top:184px;width:1px;height:506px"></div>
<div class="a gl" style="left:26px;top:203px;width:1320px;height:1px"></div>
<div class="a gl" style="left:26px;top:223px;width:1320px;height:1px"></div>
<div class="a gl" style="left:26px;top:243px;width:1320px;height:1px"></div>
<div class="a gl" style="left:26px;top:263px;width:1320px;height:1px"></div>
<div class="a gl" style="left:26px;top:283px;width:1320px;height:1px"></div>
<div class="a gl" style="left:26px;top:303px;width:1320px;height:1px"></div>
<div class="a gl" style="left:26px;top:323px;width:1320px;height:1px"></div>
<div class="a gl" style="left:26px;top:343px;width:1320px;height:1px"></div>
<div class="a gl" style="left:26px;top:363px;width:1320px;height:1px"></div>
<div class="a gl" style="left:26px;top:383px;width:1320px;height:1px"></div>
<div class="a gl" style="left:26px;top:403px;width:1320px;height:1px"></div>
<div class="a gl" style="left:26px;top:423px;width:1320px;height:1px"></div>
<div class="a gl" style="left:26px;top:443px;width:1320px;height:1px"></div>
<div class="a gl" style="left:26px;top:463px;width:1320px;height:1px"></div>
<div class="a gl" style="left:26px;top:483px;width:1320px;height:1px"></div>
<div class="a gl" style="left:26px;top:503px;width:1320px;height:1px"></div>
<div class="a gl" style="left:26px;top:523px;width:1320px;height:1px"></div>
<div class="a gl" style="left:26px;top:543px;width:1320px;height:1px"></div>
<div class="a gl" style="left:26px;top:563px;width:1320px;height:1px"></div>
<div class="a gl" style="left:26px;top:583px;width:1320px;height:1px"></div>
<div class="a gl" style="left:26px;top:603px;width:1320px;height:1px"></div>
<div class="a gl" style="left:26px;top:623px;width:1320px;height:1px"></div>
<div class="a gl" style="left:26px;top:643px;width:1320px;height:1px"></div>
<div class="a gl" style="left:26px;top:663px;width:1320px;height:1px"></div>
<div class="a gl" style="left:26px;top:683px;width:1320px;height:1px"></div>
<div class="a" style="left:26px;top:184px;width:547px;height:19px;background:#ffff00"></div>
<div class="a" style="left:26px;top:203px;width:548px;height:1px;background:#000"></div>
<div class="a" style="left:26px;top:223px;width:548px;height:1px;background:#000"></div>
<div class="a" style="left:26px;top:243px;width:548px;height:1px;background:#000"></div>
<div class="a" style="left:26px;top:263px;width:548px;height:1px;background:#000"></div>
<div class="a" style="left:26px;top:283px;width:548px;height:1px;background:#000"></div>
<div class="a" style="left:26px;top:303px;width:548px;height:1px;background:#000"></div>
<div class="a" style="left:26px;top:323px;width:548px;height:1px;background:#000"></div>
<div class="a" style="left:26px;top:343px;width:548px;height:1px;background:#000"></div>
<div class="a" style="left:26px;top:363px;width:548px;height:1px;background:#000"></div>
<div class="a" style="left:26px;top:383px;width:548px;height:1px;background:#000"></div>
<div class="a" style="left:26px;top:403px;width:548px;height:1px;background:#000"></div>
<div class="a" style="left:26px;top:423px;width:548px;height:1px;background:#000"></div>
<div class="a" style="left:26px;top:443px;width:548px;height:1px;background:#000"></div>
<div class="a" style="left:26px;top:463px;width:548px;height:1px;background:#000"></div>
<div class="a" style="left:26px;top:483px;width:548px;height:1px;background:#000"></div>
<div class="a" style="left:26px;top:503px;width:548px;height:1px;background:#000"></div>
<div class="a" style="left:26px;top:523px;width:548px;height:1px;background:#000"></div>
<div class="a" style="left:26px;top:543px;width:548px;height:1px;background:#000"></div>
<div class="a" style="left:26px;top:563px;width:548px;height:1px;background:#000"></div>
<div class="a" style="left:26px;top:583px;width:548px;height:1px;background:#000"></div>
<div class="a" style="left:26px;top:603px;width:548px;height:1px;background:#000"></div>
<div class="a" style="left:289px;top:184px;width:1px;height:420px;background:#000"></div>
<div class="a" style="left:432px;top:184px;width:1px;height:420px;background:#000"></div>
<div class="a" style="left:573px;top:184px;width:1px;height:420px;background:#000"></div>
<div class="a cell" style="left:26px;top:184px;width:263px;text-align:left;padding-left:3px;">Строка</div>
<div class="a cell" style="left:290px;top:184px;width:142px;text-align:left;padding-left:3px;">Параметр</div>
<div class="a cell" style="left:433px;top:184px;width:140px;text-align:left;padding-left:3px;">Параметр</div>
<div class="a cell" style="left:26px;top:204px;width:263px;text-align:center;">Строка 1</div>
<div class="a cell" style="left:290px;top:204px;width:142px;text-align:center;">1</div>
<div class="a cell" style="left:433px;top:204px;width:140px;text-align:center;">21</div>
<div class="a cell" style="left:26px;top:224px;width:263px;text-align:center;">Строка 2</div>
<div class="a cell" style="left:290px;top:224px;width:142px;text-align:center;">2</div>
<div class="a cell" style="left:433px;top:224px;width:140px;text-align:center;">22</div>
<div class="a cell" style="left:26px;top:244px;width:263px;text-align:center;">Строка 3</div>
<div class="a cell" style="left:290px;top:244px;width:142px;text-align:center;">3</div>
<div class="a cell" style="left:433px;top:244px;width:140px;text-align:center;">23</div>
<div class="a cell" style="left:26px;top:264px;width:263px;text-align:center;">Строка 4</div>
<div class="a cell" style="left:290px;top:264px;width:142px;text-align:center;">4</div>
<div class="a cell" style="left:433px;top:264px;width:140px;text-align:center;">24</div>
<div class="a cell" style="left:26px;top:284px;width:263px;text-align:center;">Строка 5</div>
<div class="a cell" style="left:290px;top:284px;width:142px;text-align:center;">5</div>
<div class="a cell" style="left:433px;top:284px;width:140px;text-align:center;">25</div>
<div class="a cell" style="left:26px;top:304px;width:263px;text-align:center;">Строка 6</div>
<div class="a cell" style="left:290px;top:304px;width:142px;text-align:center;">6</div>
<div class="a cell" style="left:433px;top:304px;width:140px;text-align:center;">26</div>
<div class="a cell" style="left:26px;top:324px;width:263px;text-align:center;">Строка 7</div>
<div class="a cell" style="left:290px;top:324px;width:142px;text-align:center;">7</div>
<div class="a cell" style="left:433px;top:324px;width:140px;text-align:center;">27</div>
<div class="a cell" style="left:26px;top:344px;width:263px;text-align:center;">Строка 8</div>
<div class="a cell" style="left:290px;top:344px;width:142px;text-align:center;">8</div>
<div class="a cell" style="left:433px;top:344px;width:140px;text-align:center;">28</div>
<div class="a cell" style="left:26px;top:364px;width:263px;text-align:center;">Строка 9</div>
<div class="a cell" style="left:290px;top:364px;width:142px;text-align:center;">9</div>
<div class="a cell" style="left:433px;top:364px;width:140px;text-align:center;">29</div>
<div class="a cell" style="left:26px;top:384px;width:263px;text-align:center;">Строка 10</div>
<div class="a cell" style="left:290px;top:384px;width:142px;text-align:center;">10</div>
<div class="a cell" style="left:433px;top:384px;width:140px;text-align:center;">30</div>
<div class="a cell" style="left:26px;top:404px;width:263px;text-align:center;">Строка 11</div>
<div class="a cell" style="left:290px;top:404px;width:142px;text-align:center;">11</div>
<div class="a cell" style="left:433px;top:404px;width:140px;text-align:center;">31</div>
<div class="a cell" style="left:26px;top:424px;width:263px;text-align:center;">Строка 12</div>
<div class="a cell" style="left:290px;top:424px;width:142px;text-align:center;">12</div>
<div class="a cell" style="left:433px;top:424px;width:140px;text-align:center;">32</div>
<div class="a cell" style="left:26px;top:444px;width:263px;text-align:center;">Строка 13</div>
<div class="a cell" style="left:290px;top:444px;width:142px;text-align:center;">13</div>
<div class="a cell" style="left:433px;top:444px;width:140px;text-align:center;">33</div>
<div class="a cell" style="left:26px;top:464px;width:263px;text-align:center;">Строка 14</div>
<div class="a cell" style="left:290px;top:464px;width:142px;text-align:center;">14</div>
<div class="a cell" style="left:433px;top:464px;width:140px;text-align:center;">34</div>
<div class="a cell" style="left:26px;top:484px;width:263px;text-align:center;">Строка 15</div>
<div class="a cell" style="left:290px;top:484px;width:142px;text-align:center;">15</div>
<div class="a cell" style="left:433px;top:484px;width:140px;text-align:center;">35</div>
<div class="a cell" style="left:26px;top:504px;width:263px;text-align:center;">Строка 16</div>
<div class="a cell" style="left:290px;top:504px;width:142px;text-align:center;">16</div>
<div class="a cell" style="left:433px;top:504px;width:140px;text-align:center;">36</div>
<div class="a cell" style="left:26px;top:524px;width:263px;text-align:center;">Строка 17</div>
<div class="a cell" style="left:290px;top:524px;width:142px;text-align:center;">17</div>
<div class="a cell" style="left:433px;top:524px;width:140px;text-align:center;">37</div>
<div class="a cell" style="left:26px;top:544px;width:263px;text-align:center;">Строка 18</div>
<div class="a cell" style="left:290px;top:544px;width:142px;text-align:center;">18</div>
<div class="a cell" style="left:433px;top:544px;width:140px;text-align:center;">38</div>
<div class="a cell" style="left:26px;top:564px;width:263px;text-align:center;">Строка 19</div>
<div class="a cell" style="left:290px;top:564px;width:142px;text-align:center;">19</div>
<div class="a cell" style="left:433px;top:564px;width:140px;text-align:center;">39</div>
<div class="a cell" style="left:26px;top:584px;width:263px;text-align:center;">Строка 20</div>
<div class="a cell" style="left:290px;top:584px;width:142px;text-align:center;">20</div>
<div class="a cell" style="left:433px;top:584px;width:140px;text-align:center;">40</div>
<div class="a" style="left:431px;top:302px;width:144px;height:23px;border:1px solid #000"></div>
<div class="a" style="left:432px;top:303px;width:142px;height:21px;border:1px solid #fff"></div>
<div class="a" style="left:433px;top:304px;width:140px;height:19px;border:1px solid #000"></div>
<div class="a" style="left:571px;top:321px;width:5px;height:5px;background:#000"></div>
<div class="a" style="left:573px;top:321px;width:1px;height:5px;background:#fff"></div>
<div class="a" style="left:571px;top:323px;width:5px;height:1px;background:#fff"></div>
</div>
<div class="a" style="left:1346px;top:164px;width:20px;height:526px;background:#e4e7ec"></div>
<div class="a" style="left:1346px;top:164px;width:16px;height:526px;background:linear-gradient(90deg,#dde1e7,#e6e9ee 50%,#dde1e7)"></div>
<div class="a" style="left:1362px;top:164px;width:1px;height:526px;background:#9aa0a8"></div>
<div class="a" style="left:1363px;top:138px;width:3px;height:590px;background:#e9ebee"></div>
<div class="a" style="left:1347px;top:164px;width:14px;height:8px;background:#fff;border:1px solid #8c9299"></div>
<div class="a" style="left:1350px;top:167px;width:8px;height:1px;background:#777"></div>
<svg class="a" style="left:1349px;top:178px" width="10" height="6" viewBox="0 0 10 6"><path d="M0.5 5.5 L4.5 0.5 L8.5 5.5 Z" fill="#4a4a4a"/></svg>
<div class="a" style="left:1346px;top:189px;width:15px;height:464px;border:1px solid #8f959d;border-radius:2px;background:linear-gradient(90deg,#f3f5f8,#e9ecf0 60%,#dde1e7)"></div>
<div class="a" style="left:1350px;top:419px;width:7px;height:1px;background:#777"></div>
<div class="a" style="left:1350px;top:421px;width:7px;height:1px;background:#777"></div>
<div class="a" style="left:1350px;top:423px;width:7px;height:1px;background:#777"></div>
<svg class="a" style="left:1349px;top:679px" width="10" height="6" viewBox="0 0 10 6"><path d="M0.5 0.5 L8.5 0.5 L4.5 5.5 Z" fill="#4a4a4a"/></svg>
<div class="a" style="left:0px;top:690px;width:1366px;height:16px;background:#dfe3ea"></div>
<div class="a" style="left:1362px;top:690px;width:1px;height:16px;background:#9aa0a8"></div>
<div class="a" style="left:0px;top:690px;width:808px;height:1px;background:#a3a9b1"></div>
<div class="a" style="left:808px;top:690px;width:538px;height:1px;background:#9aa1a9"></div>
<div class="a" style="left:0px;top:690px;width:63px;height:16px;background:linear-gradient(#e8ebf0,#d9dde4);border:1px solid #a3a9b1;border-left:none;border-bottom:none"></div>
<svg class="a" style="left:5px;top:693px" width="9" height="10" viewBox="0 0 9 10"><rect x="0.5" y="0.5" width="1.2" height="8" fill="#444"/><path d="M7 0.5 L2.5 4.5 L7 8.5 Z" fill="#444"/></svg>
<svg class="a" style="left:21px;top:693px" width="8" height="10" viewBox="0 0 8 10"><path d="M6 0.5 L1.5 4.5 L6 8.5 Z" fill="#444"/></svg>
<svg class="a" style="left:36px;top:693px" width="8" height="10" viewBox="0 0 8 10"><path d="M1.5 0.5 L6 4.5 L1.5 8.5 Z" fill="#444"/></svg>
<svg class="a" style="left:49px;top:693px" width="9" height="10" viewBox="0 0 9 10"><path d="M1 0.5 L5.5 4.5 L1 8.5 Z" fill="#444"/><rect x="6" y="0.5" width="1.2" height="8" fill="#444"/></svg>
<svg class="a" style="left:0px;top:690px" width="1346" height="17" viewBox="0 0 1346 17"><defs><linearGradient id="tg" x1="0" y1="0" x2="0" y2="1"><stop offset="0" stop-color="#eef0f4"/><stop offset="1" stop-color="#d3d8df"/></linearGradient></defs>
<path d="M112 15.5 H1346" stroke="#8e959d"/>
<path d="M218.5 15.5 L233 1 L265 1 L250.5 15.5 Z" fill="url(#tg)"/>
<path d="M165 15.5 L179.5 1 L233 1 L218.5 15.5 Z" fill="url(#tg)"/>
<path d="M112.5 15.5 L127 1 L179.5 1 L165 15.5 Z" fill="url(#tg)"/>
<path d="M112.5 15.5 L127 1 M165 15.5 L179.5 1 M218.5 15.5 L233 1 M250.5 15.5 L265 1" stroke="#979ea7" stroke-width="1"/>
<path d="M112 15.5 l3 -3 l2 3 Z M164.5 15.5 l3 -3 l2 3 Z M218 15.5 l3 -3 l2 3 Z" fill="#fff"/>
<path d="M63 1 H127 L112.5 15.5 H63 Z" fill="#fff"/></svg>
<div class="t" style="left:72px;top:693px;font-size:12px;line-height:12px;color:#333;font-weight:bold">Лист1</div>
<div class="t" style="left:126px;top:693px;font-size:12px;line-height:12px;color:#4a4a4a;">Лист2</div>
<div class="t" style="left:179px;top:693px;font-size:12px;line-height:12px;color:#444;">Лист3</div>
<svg class="a" style="left:232px;top:691px" width="17" height="14" viewBox="0 0 17 14"><rect x="4.5" y="4.5" width="10" height="8" rx="1.5" fill="#e3ebf6" stroke="#5b7bb0"/><path d="M4.5 1 L4.5 7 M1.5 4 L7.5 4 M2.4 1.9 L6.6 6.1 M6.6 1.9 L2.4 6.1" stroke="#f3b21c" stroke-width="1.3"/></svg>
<div class="a" style="left:808px;top:691px;width:9px;height:15px;background:#fff;border:1px solid #8d939b;border-radius:1px"></div>
<div class="a" style="left:812px;top:694px;width:1px;height:8px;background:#666"></div>
<svg class="a" style="left:820px;top:694px" width="7" height="9" viewBox="0 0 7 9"><path d="M6 0.5 L1 4.5 L6 8.5 Z" fill="#4a4a4a"/></svg>
<div class="a" style="left:833px;top:691px;width:455px;height:15px;border:1px solid #8f959d;border-radius:2px;background:linear-gradient(#f3f5f8,#e8ebf0 55%,#dde1e7)"></div>
<div class="a" style="left:1057px;top:695px;width:1px;height:7px;background:#777"></div>
<div class="a" style="left:1059px;top:695px;width:1px;height:7px;background:#777"></div>
<div class="a" style="left:1061px;top:695px;width:1px;height:7px;background:#777"></div>
<div class="a" style="left:1063px;top:695px;width:1px;height:7px;background:#777"></div>
<svg class="a" style="left:1327px;top:694px" width="7" height="9" viewBox="0 0 7 9"><path d="M1 0.5 L6 4.5 L1 8.5 Z" fill="#4a4a4a"/></svg>
<div class="a" style="left:1337px;top:691px;width:9px;height:15px;background:#fff;border:1px solid #8d939b;border-radius:1px"></div>
<div class="a" style="left:1341px;top:694px;width:1px;height:8px;background:#666"></div>
<div class="a" style="left:0px;top:706px;width:1366px;height:22px;background:linear-gradient(#f0f2f5,#e4e7eb 45%,#d3d7dd 85%,#c9cdd3)"></div>
<div class="a" style="left:0px;top:706px;width:1366px;height:1px;background:#c9cdd3"></div>
<div class="t" style="left:8px;top:711px;font-size:11.6px;line-height:11.6px;color:#3b3b3b;">Готово</div>
<div class="a" style="left:54px;top:708px;width:1px;height:19px;background:#b8bcc2"></div>
<div class="a" style="left:55px;top:708px;width:1px;height:19px;background:#fafbfc"></div>
<div class="a" style="left:1124px;top:708px;width:1px;height:19px;background:#b8bcc2"></div>
<div class="a" style="left:1125px;top:708px;width:1px;height:19px;background:#fafbfc"></div>
<div class="a" style="left:1129px;top:708px;width:19px;height:19px;border:1px solid #e6ad3c;border-radius:2px;background:linear-gradient(#fde69c,#fcd773)"></div>
<svg class="a" style="left:1132px;top:711px" width="14" height="12" viewBox="0 0 14 12"><rect x="0.5" y="0.5" width="12" height="10" fill="#fff" stroke="#444"/><path d="M0.5 3.8 H12.5 M0.5 7.2 H12.5 M4.5 0.5 V10.5 M8.5 0.5 V10.5" stroke="#444"/></svg>
<svg class="a" style="left:1150px;top:711px" width="15" height="13" viewBox="0 0 15 13"><rect x="0.5" y="0.5" width="13" height="11" fill="#e8e8e8" stroke="#666"/><rect x="3.5" y="2.5" width="7" height="7" fill="#fff" stroke="#888"/><path d="M5 4.5 H9 M5 6.5 H9" stroke="#aaa"/></svg>
<svg class="a" style="left:1169px;top:711px" width="15" height="13" viewBox="0 0 15 13"><rect x="0.5" y="0.5" width="13" height="11" fill="#fff" stroke="#777"/><rect x="1" y="7" width="12.5" height="5" fill="#a9a9a9"/><rect x="9" y="1" width="4.5" height="6" fill="#a9a9a9"/><path d="M5 0.5 V8" stroke="#777"/></svg>
<div class="t" style="left:1195px;top:712px;font-size:10.8px;line-height:10.8px;color:#3b3b3b;transform:scaleX(1)">100%</div>
<div class="a" style="left:1246px;top:716px;width:100px;height:1px;background:#a8adb4"></div>
<div class="a" style="left:1246px;top:717px;width:100px;height:1px;background:#f8f9fa"></div>
<svg class="a" style="left:1229px;top:708px" width="18" height="18" viewBox="0 0 18 18"><circle cx="8.5" cy="8.5" r="7.5" fill="#fafafa" stroke="#8b8f95" stroke-width="1.2"/><rect x="4.5" y="7.5" width="8" height="2" fill="#444"/></svg>
<svg class="a" style="left:1345px;top:708px" width="18" height="18" viewBox="0 0 18 18"><circle cx="8.5" cy="8.5" r="7.5" fill="#fafafa" stroke="#8b8f95" stroke-width="1.2"/><rect x="4.5" y="7.5" width="8" height="2" fill="#444"/><rect x="7.5" y="4.5" width="2" height="8" fill="#444"/></svg>
<svg class="a" style="left:1291px;top:708px" width="11" height="15" viewBox="0 0 11 15"><path d="M0.5 0.5 H9.5 V9 L5 13.5 L0.5 9 Z" fill="#fbfbfb" stroke="#7d8289"/></svg>
<div class="a" style="left:0px;top:728px;width:1366px;height:40px;background:#000"></div>
<svg class="a" style="left:0px;top:728px" width="520" height="40" viewBox="0 0 520 40"><path d="M0 0 H441 L398 40 H0 Z" fill="#1f1a07"/><path d="M441 0 H489 V40 H441 Z" fill="#2f2f2f"/></svg>
<div class="a" style="left:441px;top:728px;width:48px;height:40px;background:linear-gradient(160deg,#454542,#353535 50%,#2b2b2b)"></div>
<svg class="a" style="left:15px;top:739px" width="18" height="18" viewBox="0 0 18 18"><path d="M0 2.6 L7 1.6 V8 H0 Z M8 1.5 L17 0.2 V8 H8 Z M0 9 H7 V15.4 L0 14.4 Z M8 9 H17 V16.8 L8 15.5 Z" fill="#fff"/></svg>
<svg class="a" style="left:63px;top:739px" width="17" height="18" viewBox="0 0 17 18"><circle cx="10" cy="6.5" r="5.3" fill="none" stroke="#fff" stroke-width="1.3"/><path d="M6.2 10.5 L1 16" stroke="#fff" stroke-width="1.5"/></svg>
<svg class="a" style="left:109px;top:740px" width="22" height="16" viewBox="0 0 22 16"><rect x="4.5" y="0.8" width="12" height="13.5" fill="none" stroke="#fff" stroke-width="1.4"/><path d="M2.5 3 H0.8 V12 H2.5 M19 3 H20.7 V12 H19" fill="none" stroke="#fff" stroke-width="1.3"/></svg>
<svg class="a" style="left:159px;top:738px" width="24" height="21" viewBox="0 0 24 21"><path d="M1 2 H8 L10 4 H22 V19 H1 Z" fill="#f4d36c"/><rect x="1" y="5" width="21" height="14" fill="#fbe291"/><path d="M7 19 V12 H16 V19 H13 V15 H10 V19 Z" fill="#2a9ee6"/></svg>
<svg class="a" style="left:208px;top:737px" width="24" height="24" viewBox="0 0 24 24"><defs><radialGradient id="yg" cx="40%" cy="30%" r="75%"><stop offset="0" stop-color="#fff"/><stop offset="1" stop-color="#cfcfcf"/></radialGradient></defs><circle cx="11.5" cy="11.5" r="11" fill="url(#yg)"/><path d="M6 5 L11.5 12 L17 5 M11.5 12 V19" fill="none" stroke="#e8202a" stroke-width="2.6"/></svg>
<svg class="a" style="left:256px;top:736px" width="26" height="24" viewBox="0 0 26 24"><path d="M13 0 L16.5 11 L13 23 L9.5 11 Z" fill="#3fae32"/><path d="M13 3 L14.5 11 L13 19 L11.5 11 Z" fill="#b8e860"/><text x="0" y="20" font-family="Liberation Sans" font-weight="bold" font-size="17" fill="#2f8fe8" stroke="#1d6fd0" stroke-width="0.4">s</text><text x="7.5" y="17" font-family="Liberation Sans" font-weight="bold" font-size="13" fill="#fff">4</text><text x="15" y="15" font-family="Liberation Sans" font-weight="bold" font-size="16" fill="#2f8fe8" stroke="#1d6fd0" stroke-width="0.4">S</text></svg>
<svg class="a" style="left:306px;top:736px" width="24" height="24" viewBox="0 0 24 24"><defs><linearGradient id="sk" x1="0" y1="0" x2="1" y2="1"><stop offset="0" stop-color="#2452c0"/><stop offset="0.5" stop-color="#6f9ae8"/><stop offset="1" stop-color="#c8dcf8"/></linearGradient></defs><rect x="0" y="0" width="19" height="23" fill="#f2f2f2"/><rect x="2" y="2" width="15" height="14" fill="url(#sk)"/><rect x="2" y="14" width="15" height="3" fill="#0b1660"/><rect x="2" y="12" width="15" height="2" fill="#dfe8f8"/><path d="M22 3 L9 16" stroke="#d22234" stroke-width="2"/><path d="M9.5 15.5 L5 20" stroke="#cfcfcf" stroke-width="2.2"/></svg>
<svg class="a" style="left:354px;top:736px" width="26" height="24" viewBox="0 0 26 24"><defs><linearGradient id="ie" x1="0" y1="0" x2="0" y2="1"><stop offset="0" stop-color="#6fd0f8"/><stop offset="1" stop-color="#1d8fe0"/></linearGradient></defs><path d="M12 3.5 C6 3.5 3 8 3 12 C3 17 6.5 20.5 12 20.5 C16 20.5 19 18.5 20 15.5 H15 C14 17 13 17.5 12 17.5 C9.5 17.5 8 15.5 8 13.5 H20.5 C20.8 12.8 21 12 21 11.5 C21 7 17 3.5 12 3.5 Z M8.3 10 C8.8 8 10 6.8 12 6.8 C14 6.8 15.5 8 15.8 10 Z" fill="url(#ie)" fill-rule="evenodd"/><path d="M3 21 C0 24 3 23.5 8 20.5 C15 16 22 9 23 4 C23.8 0.5 20 1 15 3.5" fill="none" stroke="#f0b81c" stroke-width="2"/></svg>
<svg class="a" style="left:404px;top:735px" width="23" height="24" viewBox="0 0 23 24"><defs><linearGradient id="wd" x1="0" y1="0" x2="1" y2="1"><stop offset="0" stop-color="#e8f0fc"/><stop offset="1" stop-color="#9fbbe8"/></linearGradient></defs><path d="M4 1 H21.5 V22.5 H0.5 V4.5 Q0.5 1 4 1 Z" fill="url(#wd)" stroke="#2c5ab8"/><text x="1" y="17" font-family="Liberation Sans" font-weight="bold" font-size="15" fill="#1f4fb8" textLength="17" lengthAdjust="spacingAndGlyphs">W</text><path d="M8 22 L20 13 L22 15 V22.5 Z" fill="#fff"/><path d="M2 19 H14" stroke="#c8d8f0"/></svg>
<svg class="a" style="left:453px;top:736px" width="23" height="22" viewBox="0 0 23 22"><defs><linearGradient id="xl" x1="0" y1="0" x2="1" y2="1"><stop offset="0" stop-color="#f0faf0"/><stop offset="1" stop-color="#6fc070"/></linearGradient></defs><path d="M4 0.5 H21.5 V21.5 H0.5 V4 Q0.5 0.5 4 0.5 Z" fill="url(#xl)" stroke="#2a8a38"/><path d="M3.5 4 H8 L11 9 L14 4 H18 L13 11 L17.5 18 H13 L11 14 L8 18 H4 L9 11 Z" fill="#2a8a38"/><path d="M14 4 H18 L13 11 L11 9 Z" fill="#8ad070"/><path d="M9 21 L19 12 L22 14 V21.5 Z" fill="#fff"/><path d="M12 16 H20 M13 18.5 H20" stroke="#9ccf9c"/></svg>
<div class="a" style="left:200px;top:766px;width:40px;height:2px;background:#f3eab5"></div>
<div class="a" style="left:298px;top:766px;width:40px;height:2px;background:#f3eab5"></div>
<div class="a" style="left:347px;top:766px;width:40px;height:2px;background:#f3eab5"></div>
<div class="a" style="left:395px;top:766px;width:40px;height:2px;background:#f3eab5"></div>
<div class="a" style="left:441px;top:766px;width:48px;height:2px;background:#f3eab5"></div>
<svg class="a" style="left:1111px;top:742px" width="14" height="9" viewBox="0 0 14 9"><path d="M1 8 L7 2 L13 8" fill="none" stroke="#fff" stroke-width="1.3"/></svg>
<svg class="a" style="left:1135px;top:742px" width="17" height="12" viewBox="0 0 17 12"><path d="M2 1 V4 M5 1 V4 M1 4 H6 V6 L3.5 8 V11" fill="none" stroke="#fff" stroke-width="1.1"/><rect x="5.5" y="3.5" width="10" height="6" fill="none" stroke="#fff"/><rect x="7" y="5" width="7" height="3" fill="#fff"/><rect x="15.5" y="5" width="1.5" height="3" fill="#fff"/></svg>
<svg class="a" style="left:1159px;top:741px" width="17" height="14" viewBox="0 0 17 14"><path d="M1 5 H4 L8 1 V13 L4 9 H1 Z" fill="none" stroke="#fff" stroke-width="1.1"/><path d="M10 4.5 Q12 7 10 9.5 M12 2.5 Q15.5 7 12 11.5 M14 1 Q18 7 14 13" fill="none" stroke="#fff" stroke-width="1.1"/></svg>
<svg class="a" style="left:1183px;top:740px" width="24" height="15" viewBox="0 0 24 15"><rect x="1" y="1" width="22" height="12" fill="none" stroke="#fff" stroke-width="1.1"/><path d="M4 4.5 H20 M4 7 H20 M6 10 H18" stroke="#fff" stroke-dasharray="1.2 0.8"/></svg>
<div class="t" style="left:1218px;top:743px;font-size:11px;line-height:11px;color:#fff;">РУС</div>
<div class="t" style="left:1266px;top:734px;font-size:11px;line-height:11px;color:#fff;">13:30</div>
<div class="t" style="left:1252px;top:752px;font-size:11px;line-height:11px;color:#fff;">20.09.2017</div>
<svg class="a" style="left:1325px;top:739px" width="26" height="22" viewBox="0 0 26 22"><path d="M1 1 H16 V12 H7 L4 15 V12 H1 Z" fill="#fff"/><path d="M4 4 H13 M4 6.5 H13 M4 9 H13" stroke="#000" stroke-width="1"/><circle cx="17" cy="15" r="7" fill="#3a3a3a" stroke="#111" stroke-width="1.2"/><text x="17" y="19" font-family="Liberation Sans" font-size="11" fill="#fff" text-anchor="middle">3</text></svg>
<div class="a" style="left:1361px;top:728px;width:1px;height:40px;background:#333"></div>
<div class="a" style="left:637px;top:117px;width:299px;height:139px;background:#fafafa;border:1px solid #c6c6c6;box-shadow:2px 2px 2px rgba(0,0,0,.18)"></div>
<div class="a" style="left:639px;top:209px;width:295px;height:45px;border:1px solid #e9c46c;border-radius:2px;background:linear-gradient(#fdeeb4,#fce49a 40%,#fbd976 85%,#fce59a)"></div>
<svg class="a" style="left:646px;top:128px" width="31" height="26" viewBox="0 0 31 26"><defs><pattern id="hpboth" width="4" height="4" patternUnits="userSpaceOnUse"><rect width="4" height="4" fill="#fff"/><path d="M0 4 L4 0" stroke="#6f9be8" stroke-width="1" stroke-dasharray="1.2 0.8"/></pattern></defs><rect x="0.5" y="0.5" width="28" height="20" fill="#fff"/><rect x="1" y="1" width="8.5" height="19.5" fill="url(#hpboth)"/><rect x="1" y="1" width="27.5" height="3.5" fill="url(#hpboth)"/><rect x="10" y="5" width="9" height="3.5" fill="#8fb0ee"/><rect x="10" y="7.5" width="9" height="1" fill="#4f72c0"/><rect x="0.5" y="0.5" width="28" height="20" fill="none" stroke="#5d6b80" stroke-width="1.2"/><path d="M0.5 4.5 H28.5" stroke="#7d8a9c" stroke-width="1.2"/><path d="M0.5 8.5 H28.5" stroke="#7d8a9c" stroke-width="0.9"/><path d="M0.5 12.5 H28.5" stroke="#7d8a9c" stroke-width="0.9"/><path d="M0.5 16.5 H28.5" stroke="#7d8a9c" stroke-width="0.9"/><path d="M9.5 0.5 V20.5" stroke="#6d7a8c" stroke-width="1.2"/><path d="M19.5 0.5 V20.5" stroke="#6d7a8c" stroke-width="0.9"/><path d="M1 20.5 V22.5 Q1 24 3 24 H8 Q10 24 10 22.5 V20.5" fill="#fff" stroke="#5d6b80" stroke-width="1.1"/></svg>
<svg class="a" style="left:646px;top:173px" width="31" height="26" viewBox="0 0 31 26"><defs><pattern id="hprow" width="4" height="4" patternUnits="userSpaceOnUse"><rect width="4" height="4" fill="#fff"/><path d="M0 4 L4 0" stroke="#6f9be8" stroke-width="1" stroke-dasharray="1.2 0.8"/></pattern></defs><rect x="0.5" y="0.5" width="28" height="20" fill="#fff"/><rect x="1" y="1" width="27.5" height="3.5" fill="url(#hprow)"/><rect x="0.5" y="0.5" width="28" height="20" fill="none" stroke="#5d6b80" stroke-width="1.2"/><path d="M0.5 4.5 H28.5" stroke="#7d8a9c" stroke-width="1.2"/><path d="M0.5 8.5 H28.5" stroke="#7d8a9c" stroke-width="0.9"/><path d="M0.5 12.5 H28.5" stroke="#7d8a9c" stroke-width="0.9"/><path d="M0.5 16.5 H28.5" stroke="#7d8a9c" stroke-width="0.9"/><path d="M9.5 0.5 V20.5" stroke="#6d7a8c" stroke-width="1.2"/><path d="M19.5 0.5 V20.5" stroke="#6d7a8c" stroke-width="0.9"/><path d="M1 20.5 V22.5 Q1 24 3 24 H8 Q10 24 10 22.5 V20.5" fill="#fff" stroke="#5d6b80" stroke-width="1.1"/></svg>
<svg class="a" style="left:646px;top:218px" width="31" height="26" viewBox="0 0 31 26"><defs><pattern id="hpcol" width="4" height="4" patternUnits="userSpaceOnUse"><rect width="4" height="4" fill="#fff"/><path d="M0 4 L4 0" stroke="#6f9be8" stroke-width="1" stroke-dasharray="1.2 0.8"/></pattern></defs><rect x="0.5" y="0.5" width="28" height="20" fill="#fff"/><rect x="1" y="1" width="8.5" height="19.5" fill="url(#hpcol)"/><rect x="0.5" y="0.5" width="28" height="20" fill="none" stroke="#5d6b80" stroke-width="1.2"/><path d="M0.5 4.5 H28.5" stroke="#7d8a9c" stroke-width="1.2"/><path d="M0.5 8.5 H28.5" stroke="#7d8a9c" stroke-width="0.9"/><path d="M0.5 12.5 H28.5" stroke="#7d8a9c" stroke-width="0.9"/><path d="M0.5 16.5 H28.5" stroke="#7d8a9c" stroke-width="0.9"/><path d="M9.5 0.5 V20.5" stroke="#6d7a8c" stroke-width="1.2"/><path d="M19.5 0.5 V20.5" stroke="#6d7a8c" stroke-width="0.9"/><path d="M1 20.5 V22.5 Q1 24 3 24 H8 Q10 24 10 22.5 V20.5" fill="#fff" stroke="#5d6b80" stroke-width="1.1"/></svg>
<div class="t" style="left:691px;top:123px;font-size:10.95px;line-height:10.95px;color:#2b2b2b;font-weight:bold"><u>З</u>акрепить области</div>
<div class="t" style="left:691px;top:138px;font-size:11.3px;line-height:11.3px;color:#3d3d3d;">Выделенные строки и столбцы всегда будут</div>
<div class="t" style="left:691px;top:150px;font-size:11.45px;line-height:11.45px;color:#3d3d3d;">видны на экране во время прокрутки листа.</div>
<div class="t" style="left:691px;top:168px;font-size:10.95px;line-height:10.95px;color:#2b2b2b;font-weight:bold">Закрепить вер<u>х</u>нюю строку</div>
<div class="t" style="left:691px;top:183px;font-size:11.3px;line-height:11.3px;color:#3d3d3d;">Верхняя строка всегда будет видна на</div>
<div class="t" style="left:691px;top:195px;font-size:11.6px;line-height:11.6px;color:#3d3d3d;">экране во время прокрутки листа.</div>
<div class="t" style="left:691px;top:213px;font-size:10.95px;line-height:10.95px;color:#2b2b2b;font-weight:bold">Закрепить первы<u>й</u> столбец</div>
<div class="t" style="left:691px;top:228px;font-size:11.3px;line-height:11.3px;color:#3d3d3d;">Первый столбец всегда будет виден на</div>
<div class="t" style="left:691px;top:241px;font-size:11.6px;line-height:11.6px;color:#3d3d3d;">экране во время прокрутки листа.</div>
</body></html>
